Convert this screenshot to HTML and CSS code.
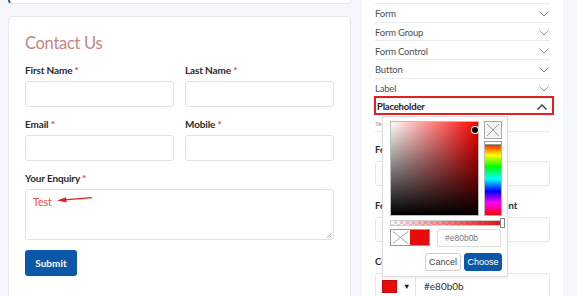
FILE: index.html
```html
<!DOCTYPE HTML>
<html>
<head>
<meta charset="utf-8">
<title>Contact Us</title>
<link rel="stylesheet" href="styles.css">
</head>

<body>
<div class="page">
	<div class="left">
		<div class="card-top"></div>
		<div class="card">
			<h2 class="title">Contact Us</h2>
			<div class="row">
				<div class="field">
					<label>First Name <span class="req">*</span></label>
					<div class="input"></div>
				</div>
				<div class="field">
					<label>Last Name <span class="req">*</span></label>
					<div class="input"></div>
				</div>
			</div>
			<div class="row">
				<div class="field">
					<label>Email <span class="req">*</span></label>
					<div class="input"></div>
				</div>
				<div class="field">
					<label>Mobile <span class="req">*</span></label>
					<div class="input"></div>
				</div>
			</div>
			<div class="field">
				<label>Your Enquiry <span class="req">*</span></label>
				<div class="input area">
					<span class="ph">Test</span>
					<svg class="grip" width="6" height="6" viewBox="0 0 6 6"><path d="M5.5 1 L1 5.5 M5.5 3.5 L3.5 5.5" stroke="#888" stroke-width="0.8"/></svg>
				</div>
			</div>
			<button class="submit">Submit</button>
			<!-- arrow pointing at the placeholder -->
			<svg class="arrow" width="36" height="8" viewBox="0 0 36 8"><path d="M35 1.6 L7 3.9" stroke="#e5211b" stroke-width="1.4"/><polygon points="0,4.4 9,1.2 9.6,6.6" fill="#e5211b"/></svg>
		</div>
	</div>

	<div class="panel">
		<ul class="acc">
			<li>Form <svg class="chev" width="10" height="6" viewBox="0 0 10 6"><polyline points="0.5,0.5 5,5 9.5,0.5" fill="none" stroke="#8c8c8c"/></svg></li>
			<li>Form Group <svg class="chev" width="10" height="6" viewBox="0 0 10 6"><polyline points="0.5,0.5 5,5 9.5,0.5" fill="none" stroke="#8c8c8c"/></svg></li>
			<li>Form Control <svg class="chev" width="10" height="6" viewBox="0 0 10 6"><polyline points="0.5,0.5 5,5 9.5,0.5" fill="none" stroke="#8c8c8c"/></svg></li>
			<li>Button <svg class="chev" width="10" height="6" viewBox="0 0 10 6"><polyline points="0.5,0.5 5,5 9.5,0.5" fill="none" stroke="#8c8c8c"/></svg></li>
			<li>Label <svg class="chev" width="10" height="6" viewBox="0 0 10 6"><polyline points="0.5,0.5 5,5 9.5,0.5" fill="none" stroke="#8c8c8c"/></svg></li>
			<li class="open">Placeholder <svg class="chev" width="10" height="6" viewBox="0 0 10 6"><polyline points="0.5,5.5 5,1 9.5,5.5" fill="none" stroke="#333" stroke-width="1.3"/></svg></li>
		</ul>
		<div class="desc">Text color and font of the placeholder</div>
		<div class="pfield">
			<div class="plabel">Font Size</div>
			<div class="pinput"></div>
		</div>
		<div class="pfield">
			<div class="plabel">Font Style of Placeholder Element</div>
			<div class="pinput"></div>
		</div>
		<div class="pfield">
			<div class="plabel">Color</div>
			<div class="pcolor">
				<div class="pswatch"><span class="sw"></span><span class="caret">&#9660;</span></div>
				<span class="pval">#e80b0b</span>
			</div>
		</div>

		<!-- color picker popup -->
		<div class="picker">
			<div class="pick-top">
				<div class="sat"><span class="dot"></span></div>
				<div class="side">
					<div class="clear"><svg width="16" height="16" viewBox="0 0 16 16"><path d="M2 2 L14 14 M14 2 L2 14" stroke="#9a9a9a" stroke-width="1"/></svg></div>
					<div class="hue"><span class="hue-h"></span></div>
				</div>
			</div>
			<div class="alpha"><span class="alpha-h"></span></div>
			<div class="pick-mid">
				<div class="preview">
					<span class="none"><svg width="20" height="15" viewBox="0 0 20 15"><path d="M2 1 L18 14 M18 1 L2 14" stroke="#a0a0a0" stroke-width="1"/></svg></span>
					<span class="cur"></span>
				</div>
				<div class="hex">#e80b0b</div>
			</div>
			<div class="pick-btns">
				<button class="cancel">Cancel</button>
				<button class="choose">Choose</button>
			</div>
		</div>
	</div>
</div>
</body>
</html>
```

FILE: styles.css
```css
* {margin:0; padding:0; box-sizing:border-box;}
li {list-style:none;}
body {background:#f4f6fa; font-family:Lato, "Liberation Sans", sans-serif; color:#222;}

.page {display:flex; height:296px; overflow:hidden;}

/* left column: the form */
.left {width:343px; margin-left:8px; flex:none;}
.card-top {height:4px; background:#fff; border:1px solid #e4e7ec; border-top:0; border-left:2px solid #1a5fb4; border-radius:0 0 4px 4px;}
.card {position:relative; margin-top:11.7px; height:320px; background:#fff; border:1px solid #e4e7ec; border-radius:4px; padding:16px 16px 0 16px;}
.title {font-size:16.5px; line-height:20px; font-weight:400; color:#c68480; letter-spacing:-0.3px; margin-bottom:10px;}
.row {display:grid; grid-template-columns:1fr 1fr; column-gap:11px;}
.field label {display:block; font-size:10px; line-height:14px; font-weight:700; color:#2b2b2b; letter-spacing:-0.15px; margin-bottom:4px;}
.req {color:#e04848;}
.input {height:26px; border:1px solid #e0e4e9; border-radius:3px; margin-bottom:10px;}
.area {position:relative; height:51px; padding:6px 0 0 7px; font-size:10.5px; line-height:12px;}
.ph {color:#ec4a4a;}
.grip {position:absolute; right:1px; bottom:1px;}
.submit {width:52px; height:26px; border:0; border-radius:3px; background:#0b58a8; color:#fff; font-family:Lato, "Liberation Sans", sans-serif; font-size:10px; font-weight:700;}
.arrow {position:absolute; left:48px; top:179px;}

/* right column: style panel */
.panel {position:relative; width:201px; margin-left:11px; flex:none; background:#fff; padding:3px 13px 0 13px;}
.acc li {display:flex; align-items:center; justify-content:space-between; height:18.7px; border-top:1px solid #e9ecef; font-size:9.5px; letter-spacing:-0.2px; color:#505050; padding-top:2px;}
.acc .chev {margin-right:1px;}
.acc li.open {margin:0 -4px 0 -1px; padding:2px 4px 0 1px; border:2px solid #e3201b; font-weight:700; color:#222;}
.desc {height:17px; border-bottom:1px solid #e9ecef; font-size:6.5px; line-height:18px; color:#999; white-space:nowrap; overflow:hidden;}
.plabel {font-size:9.5px; line-height:14px; font-weight:700; color:#2b2b2b; margin-top:11px; margin-bottom:4px; white-space:nowrap;}
.pfield + .pfield .plabel {margin-top:13px;}
.pfield:last-child .plabel {margin-top:9px;}
.pinput {height:25px; border:1px solid #e3e6ea; border-radius:3px;}
.pcolor {display:flex; height:30px; border:1px solid #e3e6ea; border-radius:3px;}
.pswatch {display:flex; align-items:center; width:40px; padding:0 0 3px 6px; border-right:1px solid #e3e6ea;}
.sw {width:15px; height:13px; background:#e80b0b; border:1px solid #c90a0a;}
.caret {font-size:7.5px; margin-left:6px; color:#111;}
.pval {font-size:10px; line-height:24px; padding-left:8px; color:#333;}

/* spectrum style picker */
.picker {position:absolute; left:20px; top:116px; width:126px; height:161px; background:#fff; border:1px solid #dcdcdc; box-shadow:0 1px 3px rgba(0,0,0,0.08); padding:4px 5px 0 7px; font-family:"Liberation Sans", Arial, sans-serif;}
.pick-top {display:flex; gap:5px;}
.sat {position:relative; width:89px; height:95px; background:linear-gradient(to top, #000, rgba(0,0,0,0)), linear-gradient(to right, #fff, #f00); border:1px solid #bbb;}
.dot {position:absolute; left:81px; top:5px; width:6px; height:6px; border-radius:50%; background:#000; box-shadow:0 0 0 1px #fff;}
.side {width:18px;}
.clear {width:18px; height:18px; border:1px solid #a8a8a8; background:#f4f4f4; display:flex; align-items:center; justify-content:center; margin-bottom:3px;}
.hue {position:relative; height:74px; border:1px solid #bbb; background:linear-gradient(to bottom, #f00 0%, #ff0 17%, #0f0 33%, #0ff 50%, #00f 67%, #f0f 83%, #f00 100%);}
.hue-h {position:absolute; left:-1px; right:-1px; top:-2px; height:4px; background:#fff; border:1px solid #999;}
.alpha {position:relative; width:113px; height:6px; margin-top:4px; border:1px solid #ccc; background:linear-gradient(to right, rgba(232,11,11,0), #e80b0b), repeating-conic-gradient(#ddd 0 25%, #fff 0 50%) 0 0/6px 6px;}
.alpha-h {position:absolute; right:-3px; top:-3px; width:5px; height:10px; background:#fff; border:1px solid #888;}
.pick-mid {display:flex; margin-top:3px;}
.preview {display:flex; width:40px; height:17px; border:1px solid #999;}
.preview .none {width:19px; display:flex; align-items:center; justify-content:center; background:#fff;}
.preview .cur {flex:1; background:#e80b0b;}
.hex {width:64px; height:18px; margin-left:7px; border:1px solid #ddd; border-radius:2px; font-size:8.5px; line-height:16px; padding-left:7px; color:#777;}
.pick-btns {display:flex; justify-content:flex-end; gap:3px; margin-top:6px;}
.pick-btns button {height:18px; border-radius:3px; font-family:"Liberation Sans", Arial, sans-serif; font-size:9px;}
.cancel {width:36px; background:#fff; border:1px solid #d0d0d0; color:#444;}
.choose {width:38px; background:#0b58a8; border:1px solid #0b58a8; color:#fff;}
```
